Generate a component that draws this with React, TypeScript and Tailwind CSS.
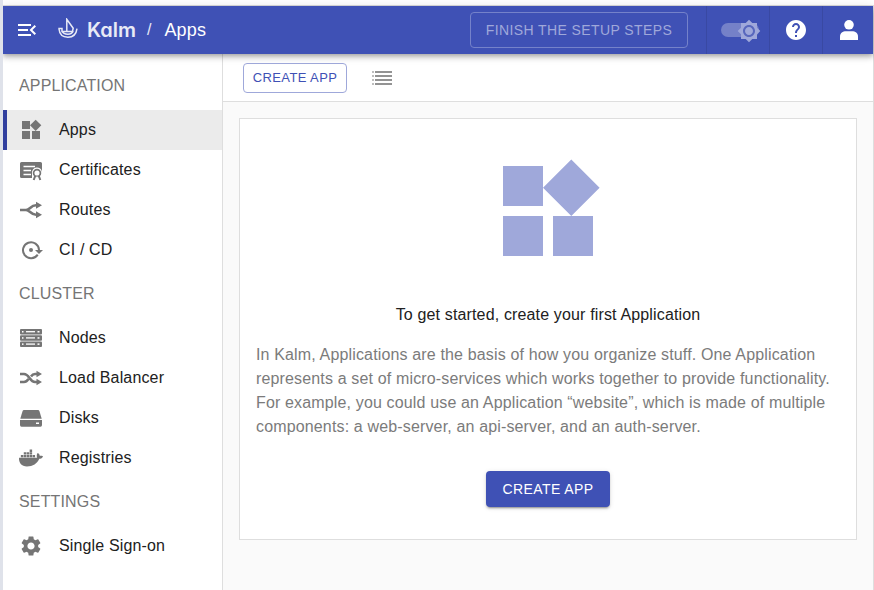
import React from "react";
import { FaDocker } from "react-icons/fa";
import { MdHelp, MdMenuOpen, MdSettings, MdWidgets, MdBrightness7 } from "react-icons/md";

function Logo() {
  return (
    <svg width="20" height="21" viewBox="0 0 20 21" fill="none" stroke="#e8eaf6" strokeWidth="1.5">
      <path d="M.3 10.600H4V13.500H14.500L15.200 10.200L8.800 1.300V13M1 11C1.500 16.200 5 19.200 9.900 19.200S18.300 16 19 10.600M3.900 13C5 15.700 7 16.200 9.900 16.200S14.200 15.700 15.200 13" />
    </svg>
  );
}

function PersonIcon() {
  return (
    <svg width="18" height="20" viewBox="0 0 18 20" fill="white">
      <circle cx="9" cy="4.8" r="4.8" />
      <path d="M0 20V16.5C0 13 2.8 11.2 6 11.2H12C15.2 11.2 18 13 18 16.5V20Z" />
    </svg>
  );
}

function CertificateIcon() {
  return (
    <svg width="24" height="24" viewBox="0 0 24 24">
      <path fill="#757575" d="M2.5 4H21.5Q23 4 23 5.500V19H16V20H2.500Q1 20 1 18.500V5.500Q1 4 2.500 4Z" />
      <path stroke="white" strokeWidth="1.300" d="M4.500 8.500H16M4.500 12.500H12M4.500 16.500H12" />
      <path fill="white" d="M13 15a5 5 0 0 1 10-1V23H13Z" />
      <circle cx="18" cy="15" r="3.400" fill="none" stroke="#757575" strokeWidth="1.700" />
      <path d="M16.200 17.800 14.700 22M19.800 17.800 21.300 22" fill="none" stroke="#757575" strokeWidth="2" />
      <path d="M18 18.500 16.500 23M18 18.500 19.500 23" stroke="white" strokeWidth=".8" />
    </svg>
  );
}

function RoutesIcon() {
  return (
    <svg width="24" height="24" viewBox="0 0 24 24" fill="none" stroke="#757575" strokeWidth="2.600">
      <path d="M1 12H7C11 12 11.500 7.300 17 7.300H18M7 12C11 12 11.500 16.700 17 16.700H18" />
      <path d="M17 3.800 23 7.300 17 10.700ZM17 13.300 23 16.700 17 20.200Z" fill="#757575" stroke="none" />
    </svg>
  );
}

function PipelineIcon() {
  return (
    <svg width="24" height="24" viewBox="0 0 24 24" fill="none" stroke="#757575" strokeWidth="2">
      <path d="M18.700 16.600A8 8 0 1 1 20 12" />
      <circle cx="12" cy="12" r="2" fill="#757575" stroke="none" />
      <path d="M16 12H24L20 16Z" fill="#757575" stroke="none" />
    </svg>
  );
}

function NodesIcon() {
  return (
    <svg width="24" height="24" viewBox="0 0 24 24">
      {[3, 9.200, 15.400].map((y) => (
        <g key={y}>
          <rect x="1" y={y} width="22" height="5.600" rx="1" fill="#757575" />
          <rect x="3" y={y + 2} width="1.500" height="1.500" fill="white" />
          <path d={`M7 ${y + 2.700}H16`} stroke="white" strokeWidth="1.300" />
          <rect x="18.500" y={y + 2} width="2" height="1.500" fill="white" />
        </g>
      ))}
    </svg>
  );
}

function BalancerIcon() {
  return (
    <svg width="24" height="24" viewBox="0 0 24 24" fill="none" stroke="#757575" strokeWidth="2.500">
      <path d="M1 8H5C10.500 8 10.500 16 16 16H18M1 16H5C7.500 16 8.500 14.500 9.500 13M12 10.500C13 9 14 8 16 8H18" />
      <path d="M17.500 4.800 23 8 17.500 11.200ZM17.500 12.800 23 16 17.500 19.200Z" fill="#757575" stroke="none" />
    </svg>
  );
}

function DiskIcon() {
  return (
    <svg width="24" height="24" viewBox="0 0 24 24" fill="#757575">
      <path d="M5 4H19Q20 4 20.400 5L22.700 12.700H1.300L3.600 5Q4 4 5 4Z" />
      <path fillRule="evenodd" d="M1 14H23V19Q23 20.700 21.500 20.700H2.500Q1 20.700 1 19ZM17 16.500V18H20V16.500Z" />
    </svg>
  );
}

function ListIcon() {
  return (
    <svg width="21" height="14" viewBox="0 0 21 14" shapeRendering="crispEdges">
      <path d="M0 1H2M0 5H2M0 9H2M0 13H2" stroke="#bdbdbd" strokeWidth="2" />
      <path d="M3 1H20M3 5H20M3 9H20M3 13H20" stroke="#939393" strokeWidth="2" />
    </svg>
  );
}

const sections: { title: string; items: { label: string; icon: React.ReactNode; active?: boolean }[] }[] = [
  {
    title: "APPLICATION",
    items: [
      { label: "Apps", icon: <MdWidgets size={24} />, active: true },
      { label: "Certificates", icon: <CertificateIcon /> },
      { label: "Routes", icon: <RoutesIcon /> },
      { label: "CI / CD", icon: <PipelineIcon /> },
    ],
  },
  {
    title: "CLUSTER",
    items: [
      { label: "Nodes", icon: <NodesIcon /> },
      { label: "Load Balancer", icon: <BalancerIcon /> },
      { label: "Disks", icon: <DiskIcon /> },
      { label: "Registries", icon: <FaDocker size={24} /> },
    ],
  },
  { title: "SETTINGS", items: [{ label: "Single Sign-on", icon: <MdSettings size={24} /> }] },
];

function Header() {
  return (
    <header className="relative z-10 flex h-12 shrink-0 items-center bg-[#3f51b5] pl-3 tracking-normal text-white shadow-[0_2px_4px_-1px_rgba(0,0,0,0.2),0_4px_5px_rgba(0,0,0,0.14),0_1px_10px_rgba(0,0,0,0.12)]">
      <MdMenuOpen size={24} />
      <div className="ml-[19px] -mt-[3px]"><Logo /></div>
      <span className="ml-[9px] w-[49px] -mt-px font-[Inter,sans-serif] text-[20px] leading-6 font-semibold text-[#e8eaf6] [font-feature-settings:'cv11']">Kalm</span>
      <span className="ml-[11px] text-base text-[#e8eaf6]">/</span>
      <span className="ml-[13px] text-lg tracking-[0.15px]">Apps</span>
      <div className="ml-auto flex h-full items-center">
        <button className="mr-[18px] h-9 w-[218px] rounded border border-[#7582ca] text-[14px] tracking-[0.4px] whitespace-nowrap text-[#9fa8da]">FINISH THE SETUP STEPS</button>
        <div className="flex h-full w-[63px] items-center border-l border-[#3949a3] pl-[14px]">
          <div className="h-[14px] w-[38px] rounded-full bg-[#7581c8]">
            <div className="-mt-[4px] ml-[16px] text-[#9fa8da]">
              <svg width="24" height="24" viewBox="0 0 24 24">
                <circle cx="12" cy="12" r="7" fill="#5867bd" />
                <MdBrightness7 size={24} />
              </svg>
            </div>
          </div>
        </div>
        <div className="flex h-full w-[53px] items-center justify-center border-l border-[#3949a3]"><MdHelp size={24} /></div>
        <div className="flex h-full w-[51px] items-center justify-center border-l border-[#3949a3] pl-px"><PersonIcon /></div>
      </div>
    </header>
  );
}

function Sidebar() {
  return (
    <nav className="w-[220px] shrink-0 border-r border-[#dedede] bg-white pt-2">
      {sections.map((section) => (
        <div key={section.title}>
          <h2 className="flex h-12 items-center pl-4 text-base text-[#757575]">{section.title}</h2>
          {section.items.map((item) => (
            <a
              key={item.label}
              className={`flex h-10 items-center border-l-4 pl-3 text-base text-[#212121] ${item.active ? "border-[#303f9f] bg-[#ebebeb]" : "border-transparent"}`}
            >
              <span className="mr-4 text-[#757575]">{item.icon}</span>
              <span className="-mt-px">{item.label}</span>
            </a>
          ))}
        </div>
      ))}
    </nav>
  );
}

export default function App() {
  return (
    <div className="flex h-[590px] w-[874px] flex-col overflow-hidden border-l-[3px] border-[#dfe2ea] bg-white font-['Liberation_Sans',Arial,sans-serif] tracking-[0.15px]">
      <div className="h-1.5 shrink-0 border-b border-[#dedede] bg-white" />
      <div className="flex min-h-0 flex-1 flex-col border-r border-[#dedede]">
        <Header />
        <div className="flex min-h-0 flex-1">
          <Sidebar />
          <main className="flex-1 bg-[#fafafa]">
            <div className="flex h-12 items-center border-b border-[#dedede] bg-white pl-5">
              <button className="h-[30px] w-[104px] rounded border border-[#9fa8da] text-[13px] tracking-[0.4px] whitespace-nowrap text-[#3f51b5]">CREATE APP</button>
              <div className="ml-[25px]"><ListIcon /></div>
            </div>
            <section className="mx-4 mt-4 flex h-[422px] flex-col items-center border border-[#dedede] bg-white px-4 pt-8">
              <MdWidgets size={120} className="shrink-0 text-[#9fa8da]" />
              <h1 className="mt-8 text-base leading-6 text-[#212121]">To get started, create your first Application</h1>
              <p className="mt-4 w-full text-base leading-6 whitespace-nowrap text-[#7b7b7b]">
                In Kalm, Applications are the basis of how you organize stuff. One Application<br />
                represents a set of micro-services which works together to provide functionality.<br />
                For example, you could use an Application “website”, which is made of multiple<br />
                components: a web-server, an api-server, and an auth-server.
              </p>
              <button className="mt-8 h-9 w-[124px] rounded bg-[#3f51b5] text-[14px] tracking-[0.4px] text-white shadow-[0_3px_1px_-2px_rgba(0,0,0,0.2),0_2px_2px_rgba(0,0,0,0.14),0_1px_5px_rgba(0,0,0,0.12)]">CREATE APP</button>
            </section>
          </main>
        </div>
      </div>
    </div>
  );
}
